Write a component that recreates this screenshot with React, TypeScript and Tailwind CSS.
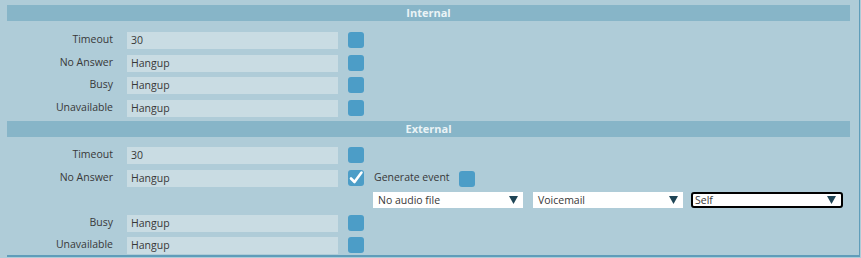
const font = { fontFamily: '"Open Sans", "DejaVu Sans", sans-serif' };

function Box({ checked = false }: { checked?: boolean }) {
  return (
    <div className="w-4 h-4 rounded-[3px] bg-[#4c9dc7] flex items-center justify-center shrink-0">
      {checked && (
        <svg width="16" height="16" viewBox="0 0 16 16">
          <path d="M3 8.5 L6.5 12 L13.5 2.5" fill="none" stroke="#ffffff" strokeWidth="2.6" strokeLinecap="round" strokeLinejoin="round" />
        </svg>
      )}
    </div>
  );
}

function Field({ label, value, checked = false, extra }: { label: string; value: string; checked?: boolean; extra?: React.ReactNode }) {
  return (
    <div className="flex items-start h-[17px]">
      <div className="w-[106px] text-right text-[10.5px] leading-[15px] text-[#383838]">{label}</div>
      <div className="ml-[14px] w-[211px] h-[17px] bg-[#c9dce3] text-[10.5px] leading-[17px] text-[#383838] pl-[4px]">{value}</div>
      <div className="ml-[10px]">
        <Box checked={checked} />
      </div>
      {extra}
    </div>
  );
}

function Select({ value, focus = false, w }: { value: string; focus?: boolean; w: string }) {
  return (
    <div
      className={
        focus
          ? "h-[16px] bg-white border-2 border-black rounded-[3px] flex items-center justify-between pl-[2px] pr-[5px] w-[152px]"
          : "h-[16px] bg-white flex items-center justify-between pl-[5px] pr-[5px] " + w
      }
    >
      <span className="text-[10.5px] text-[#383838] leading-[16px]">{value}</span>
      <svg width="9" height="8" viewBox="0 0 9 8">
        <path d="M0 0 H9 L4.5 8 Z" fill="#1f4556" />
      </svg>
    </div>
  );
}

function Header({ title }: { title: string }) {
  return (
    <div className="h-4 bg-[#87b5c8] flex items-center justify-center text-[11px] font-bold text-[#eaf3f6] leading-4">
      {title}
    </div>
  );
}

export default function App() {
  return (
    <div className="w-[861px] h-[258px] bg-[#afccd8] overflow-hidden" style={font}>
      <div className="ml-[7px] w-[853px] h-[257px] border-r border-b-2 border-[#5f9dba] pt-[5px] pr-[9px]">
        <Header title="Internal" />
        <div className="flex flex-col gap-[5.5px] mt-[11px]">
          <Field label="Timeout" value="30" />
          <Field label="No Answer" value="Hangup" />
          <Field label="Busy" value="Hangup" />
          <Field label="Unavailable" value="Hangup" />
        </div>
        <div className="mt-[4.5px]">
          <Header title="External" />
        </div>
        <div className="flex flex-col mt-[10px]">
          <Field label="Timeout" value="30" />
          <div className="mt-[6px]">
            <Field
              label="No Answer"
              value="Hangup"
              checked
              extra={
                <div className="flex items-start">
                  <span className="ml-[10px] text-[10.5px] leading-[15px] text-[#383838]">Generate event</span>
                  <div className="ml-[9px] mt-[1px]">
                    <Box />
                  </div>
                </div>
              }
            />
          </div>
          <div className="flex items-center ml-[366px] mt-[5px] gap-[10px]">
            <Select value="No audio file" w="w-[150px]" />
            <div className="-mr-[2px]">
              <Select value="Voicemail" w="w-[150px]" />
            </div>
            <Select value="Self" focus w="" />
          </div>
          <div className="mt-[7px]">
            <Field label="Busy" value="Hangup" />
          </div>
          <div className="mt-[5px]">
            <Field label="Unavailable" value="Hangup" />
          </div>
        </div>
      </div>
    </div>
  );
}
